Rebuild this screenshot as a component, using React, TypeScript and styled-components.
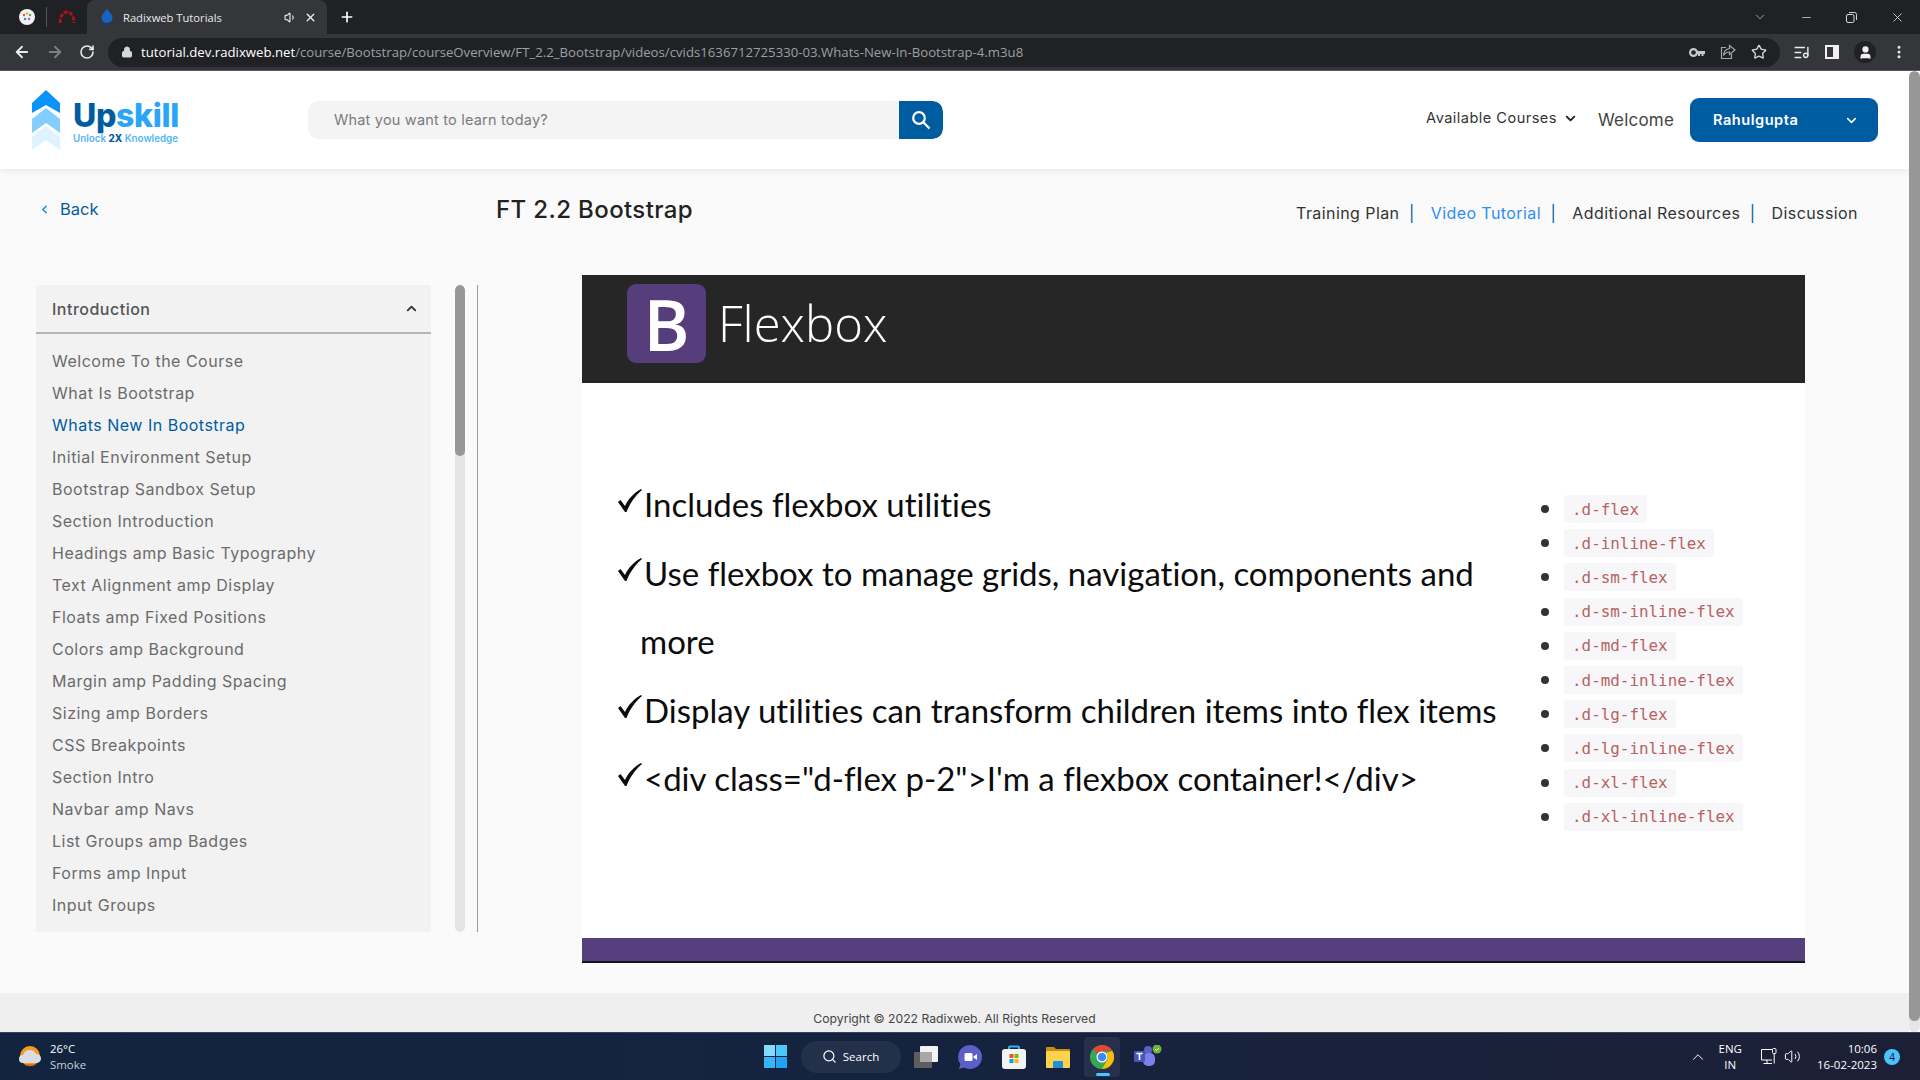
import React from "react";
import styled, { createGlobalStyle } from "styled-components";
import {
  ArrowLeft,
  ArrowRight,
  RotateCw,
  Lock,
  Star,
  ListMusic,
  User,
  ChevronDown,
  ChevronUp,
  ChevronLeft,
  Search,
  X,
  Plus,
  Minus,
  MoreVertical,
  Volume1,
  Volume2,
} from "lucide-react";

const Poppins = `Inter, "Noto Sans", sans-serif`;
const Blue = "#005ca1";

const GlobalStyle = createGlobalStyle`
  html, body {
    margin: 0;
    padding: 0;
    overflow: hidden;
    font-family: ${Poppins};
  }
  * { box-sizing: border-box; }
`;

const Screen = styled.div`
  width: 1920px;
  height: 1080px;
  display: flex;
  flex-direction: column;
  overflow: hidden;
`;

/* browser chrome */
const TabStrip = styled.div`
  height: 34px;
  background: #202124;
  display: flex;
  align-items: center;
  color: #fff;
  flex-shrink: 0;
`;

const PinnedTab = styled.div`
  width: 39px;
  display: flex;
  justify-content: center;
  align-items: center;
  margin-left: ${(p: { $first?: boolean }) => (p.$first ? "8px" : "0")};
  border-right: ${(p: { $first?: boolean }) =>
    p.$first ? "1px solid #55565a" : "none"};
  height: 20px;
`;

const ActiveTab = styled.div`
  width: 240px;
  height: 34px;
  margin-left: 1px;
  background: #35363a;
  border-radius: 8px 8px 0 0;
  display: flex;
  align-items: center;
  padding: 0 10px 0 12px;
  font-family: "Open Sans", sans-serif;
  font-size: 11.2px;
  color: #e8eaed;
`;

const TabTitle = styled.span`
  margin-left: 8px;
  flex: 1;
`;

const TabSound = styled(Volume1)`
  margin-right: 7px;
`;

const WindowControls = styled.div`
  margin-left: auto;
  display: flex;
  align-items: center;
  gap: 33px;
  padding-right: 15px;
  color: #d8d9db;
`;

const NewTab = styled.div`
  margin-left: 12px;
  display: flex;
`;

const Toolbar = styled.div`
  height: 37px;
  background: #35363a;
  border-bottom: 1px solid #5a5b60;
  display: flex;
  align-items: center;
  padding: 0 0 0 13px;
  flex-shrink: 0;
  color: #e8eaed;
`;

const NavIcons = styled.div`
  display: flex;
  align-items: center;
  gap: 15px;
  margin-right: 13px;
`;

const Omnibox = styled.div`
  width: 1672px;
  height: 29px;
  background: #202124;
  border-radius: 15px;
  display: flex;
  align-items: center;
  padding: 0 13px 0 13px;
  font-family: "Open Sans", sans-serif;
  font-size: 13.2px;
  color: #9aa0a6;
`;

const UrlHost = styled.span`
  color: #fff;
`;

const UrlText = styled.div`
  margin-left: 8px;
  flex: 1;
  white-space: nowrap;
`;

const OmniIcons = styled.div`
  display: flex;
  align-items: center;
  gap: 15px;
`;

const ExtIcons = styled.div`
  display: flex;
  align-items: center;
  gap: 15px;
  margin-left: 13px;
`;

const Avatar = styled.div`
  width: 22px;
  height: 22px;
  border-radius: 50%;
  background: #202124;
  display: flex;
  align-items: center;
  justify-content: center;
`;

/* page */
const Viewport = styled.div`
  flex: 1;
  display: flex;
  min-height: 0;
`;

const Content = styled.div`
  flex: 1;
  display: flex;
  flex-direction: column;
  background: #fafafa;
  min-width: 0;
`;

const PageScroll = styled.div`
  width: 11px;
  background: #e6e6e6;
  border-radius: 6px;
  overflow: hidden;
  flex-shrink: 0;
`;

const PageThumb = styled.div`
  height: 950px;
  background: #979797;
  border-radius: 6px;
`;

const Header = styled.header`
  height: 98px;
  background: #fff;
  box-shadow: 0 2px 6px rgba(0, 0, 0, 0.08);
  display: flex;
  align-items: center;
  padding: 0 31px 0 32px;
  flex-shrink: 0;
`;

const Brand = styled.div`
  display: flex;
  align-items: center;
  width: 276px;
  flex-shrink: 0;
`;

const BrandText = styled.div`
  margin-left: 13px;
  display: flex;
  flex-direction: column;
  margin-top: 3px;
`;

const BrandName = styled.div`
  font-size: 32px;
  line-height: 35px;
  font-weight: 800;
  letter-spacing: -0.3px;
  color: #2aa5f8;
  span {
    color: ${Blue};
  }
`;

const BrandTag = styled.div`
  font-size: 9.8px;
  font-weight: 600;
  line-height: 12px;
  color: #53b5f8;
  white-space: nowrap;
  span {
    color: ${Blue};
    font-weight: 800;
  }
`;

const SearchBox = styled.div`
  width: 635px;
  height: 38px;
  background: #f4f4f4;
  border-radius: 10px;
  display: flex;
  align-items: center;
  font-size: 14.5px;
  letter-spacing: 0.2px;
  color: #7b7b7b;
  padding-left: 26px;
  overflow: hidden;
  justify-content: space-between;
`;

const SearchHint = styled.span`
  margin-top: -2px;
`;

const SearchButton = styled.div`
  width: 44px;
  height: 38px;
  background: ${Blue};
  border-radius: 0 10px 10px 0;
  display: flex;
  align-items: center;
  justify-content: center;
  color: #fff;
`;

const HeaderNav = styled.div`
  margin-left: auto;
  display: flex;
  align-items: center;
`;

const CoursesLink = styled.div`
  display: flex;
  align-items: center;
  gap: 6px;
  font-size: 14.6px;
  letter-spacing: 0.45px;
  color: #333;
  margin-top: -4px;
`;

const WelcomeText = styled.div`
  font-size: 17px;
  letter-spacing: 0.2px;
  color: #444;
  margin-left: 20px;
  margin-right: 16px;
`;

const UserButton = styled.div`
  width: 188px;
  height: 44px;
  background: ${Blue};
  border-radius: 9px;
  display: flex;
  align-items: center;
  justify-content: space-between;
  padding: 0 19px 0 23px;
  color: #fff;
  font-size: 14.6px;
  letter-spacing: 0.5px;
  font-weight: 600;
`;

const CourseBar = styled.div`
  height: 106px;
  padding: 0 51px 0 38px;
  display: flex;
  flex-shrink: 0;
`;

const BackLink = styled.div`
  width: 458px;
  height: 80px;
  display: flex;
  align-items: center;
  gap: 9px;
  font-size: 16.5px;
  color: ${Blue};
`;

const CourseTitle = styled.h1`
  margin: 0;
  height: 80px;
  display: flex;
  align-items: center;
  font-size: 24px;
  letter-spacing: 0.38px;
  font-weight: 500;
  color: #222;
`;

const CourseTabs = styled.nav`
  margin-left: auto;
  height: 88px;
  display: flex;
  align-items: center;
  font-size: 16px;
  letter-spacing: 0.42px;
  color: #333;
`;

const CourseTab = styled.span<{ $active?: boolean }>`
  color: ${(p) => (p.$active ? "#2f8cf3" : "#333")};
  &:not(:last-child)::after {
    content: "|";
    margin: 0 16px 0 9.5px;
    color: ${Blue};
  }
`;

const Body = styled.div`
  display: flex;
  align-items: flex-start;
  padding-left: 36px;
`;

const Sidebar = styled.aside`
  width: 442px;
  height: 647px;
  margin-top: 10px;
  display: flex;
  border-right: 1px solid #9a9a9a;
  flex-shrink: 0;
`;

const Accordion = styled.div`
  width: 395px;
  height: 100%;
  background: #f2f2f2;
  overflow: hidden;
`;

const AccordionHead = styled.div`
  height: 49px;
  border-bottom: 2px solid #b5b5b5;
  display: flex;
  align-items: center;
  justify-content: space-between;
  padding: 0 12px 0 16px;
  font-size: 16px;
  letter-spacing: 0.5px;
  font-weight: 500;
  color: #555;
`;

const Lessons = styled.ul`
  list-style: none;
  margin: 0;
  padding: 11px 0 0 16px;
`;

const Lesson = styled.li<{ $active?: boolean }>`
  height: 32px;
  display: flex;
  align-items: center;
  font-size: 16px;
  letter-spacing: 0.5px;
  color: ${(p) => (p.$active ? Blue : "#6b6b6b")};
  white-space: nowrap;
`;

const SideScroll = styled.div`
  width: 10px;
  margin-left: 24px;
  background: #e4e4e4;
  border-radius: 5px;
  overflow: hidden;
`;

const SideThumb = styled.div`
  height: 171px;
  background: #979797;
  border-radius: 5px;
`;

/* slide inside the video */
const Slide = styled.div`
  width: 1223px;
  height: 688px;
  margin-left: 104px;
  background: #fff;
  display: flex;
  flex-direction: column;
  flex-shrink: 0;
`;

const SlideBanner = styled.div`
  height: 108px;
  background: #262626;
  display: flex;
  align-items: center;
  padding-left: 45px;
  flex-shrink: 0;
`;

const BootstrapMark = styled.div`
  width: 79px;
  height: 79px;
  margin-top: -11px;
  border-radius: 9px;
  background: #563d7c;
  display: flex;
  align-items: center;
  justify-content: center;
  font-family: "Open Sans", sans-serif;
  font-size: 70px;
  font-weight: 600;
  color: #fff;
  line-height: 1;
`;

const SlideTitle = styled.div`
  margin-left: 12px;
  margin-top: -12px;
  font-family: "Open Sans", sans-serif;
  font-size: 49px;
  font-weight: 300;
  color: #fff;
`;

const SlideBody = styled.div`
  flex: 1;
  display: flex;
  justify-content: space-between;
  min-height: 0;
`;

const Points = styled.div`
  width: 930px;
  padding: 87px 0 0 36px;
`;

const Point = styled.div`
  display: flex;
  font-family: Lato, sans-serif;
  font-size: 33px;
  line-height: 68.6px;
  font-variant-ligatures: none;
  color: #0c0c0c;
`;

const Check = styled.svg`
  width: 22px;
  height: 23px;
  margin-top: 19px;
  flex-shrink: 0;
  overflow: visible;
`;

const PointText = styled.div`
  text-indent: 4px;
`;

const Utilities = styled.ul`
  width: 265px;
  margin: 0;
  padding: 109px 0 0 0;
  list-style: none;
`;

const Utility = styled.li`
  height: 34.2px;
  display: flex;
  align-items: center;
  &::before {
    content: "";
    width: 8px;
    height: 8px;
    border-radius: 50%;
    background: #333;
    margin: 0 15px 0 1px;
    flex-shrink: 0;
  }
`;

const Code = styled.code`
  height: 28px;
  padding: 0 8px;
  background: #f7f7f9;
  border-radius: 3px;
  display: flex;
  align-items: center;
  font-family: "DejaVu Sans Mono", monospace;
  font-size: 15.9px;
  color: #b86261;
`;

const SlideBand = styled.div`
  height: 25px;
  background: #563f7d;
  border-bottom: 2px solid #17121f;
  flex-shrink: 0;
`;

const Footer = styled.footer`
  margin-top: auto;
  height: 39px;
  background: #efefef;
  display: flex;
  align-items: flex-end;
  justify-content: center;
  padding: 0 0 6px 0;
  font-size: 12.2px;
  color: #444;
  flex-shrink: 0;
`;

/* windows taskbar */
const Taskbar = styled.div`
  height: 48px;
  background: linear-gradient(90deg, #12243f 0%, #15233f 45%, #1c2036 100%);
  border-top: 1px solid #3a4459;
  display: grid;
  grid-template-columns: 1fr auto 1fr;
  align-items: center;
  color: #fff;
  font-family: "Open Sans", sans-serif;
  flex-shrink: 0;
`;

const Weather = styled.div`
  display: flex;
  align-items: center;
  padding-left: 18px;
  gap: 8px;
  font-size: 11.4px;
  line-height: 16px;
`;

const WeatherLabel = styled.div`
  color: #c8ccd4;
`;

const TaskIcons = styled.div`
  display: flex;
  align-items: center;
  gap: 20px;
  padding-left: 5px;
`;

const TaskSearch = styled.div`
  width: 100px;
  height: 32px;
  border-radius: 16px;
  background: #23304a;
  display: flex;
  align-items: center;
  justify-content: center;
  gap: 6px;
  font-size: 11.5px;
  margin: 0 -7px 0 -6px;
`;

const ChromeSlot = styled.div`
  width: 36px;
  height: 40px;
  border-radius: 4px;
  background: #26304a;
  display: flex;
  align-items: center;
  justify-content: center;
  margin: 0 -6px;
  position: relative;
  &::after {
    content: "";
    position: absolute;
    bottom: 1px;
    left: 12px;
    width: 14px;
    height: 3px;
    border-radius: 2px;
    background: #4cc2ff;
  }
`;

const Tray = styled.div`
  display: flex;
  align-items: center;
  justify-content: flex-end;
  font-size: 11.5px;
  line-height: 16px;
  padding-right: 20px;
`;

const TrayLang = styled.div`
  text-align: center;
  margin: 0 18px 0 12px;
`;

const TrayIcons = styled.div`
  display: flex;
  gap: 7px;
  align-items: center;
`;

const Clock = styled.div`
  text-align: right;
  margin: 0 7px 0 16px;
`;

const Badge = styled.div`
  width: 16px;
  height: 16px;
  border-radius: 50%;
  background: #4cc2ff;
  color: #111;
  font-size: 10px;
  display: flex;
  align-items: center;
  justify-content: center;
`;

const lessons = [
  "Welcome To the Course",
  "What Is Bootstrap",
  "Whats New In Bootstrap",
  "Initial Environment Setup",
  "Bootstrap Sandbox Setup",
  "Section Introduction",
  "Headings amp Basic Typography",
  "Text Alignment amp Display",
  "Floats amp Fixed Positions",
  "Colors amp Background",
  "Margin amp Padding Spacing",
  "Sizing amp Borders",
  "CSS Breakpoints",
  "Section Intro",
  "Navbar amp Navs",
  "List Groups amp Badges",
  "Forms amp Input",
  "Input Groups",
];

const utilities = [
  ".d-flex",
  ".d-inline-flex",
  ".d-sm-flex",
  ".d-sm-inline-flex",
  ".d-md-flex",
  ".d-md-inline-flex",
  ".d-lg-flex",
  ".d-lg-inline-flex",
  ".d-xl-flex",
  ".d-xl-inline-flex",
];

const points = [
  "Includes flexbox utilities",
  "Use flexbox to manage grids, navigation, components and more",
  "Display utilities can transform children items into flex items",
  '<div class="d-flex p-2">I\'m a flexbox container!</div>',
];

const ChevronLogo = () => (
  <svg width="28" height="60" viewBox="0 0 28 60">
    <path d="M14 0 L28 13 V23 L14 15 L0 23 V13 Z" fill="#0a93fb" />
    <path d="M14 18 L28 29 V43 L14 33 L0 43 V29 Z" fill="#84cdff" />
    <path d="M14 36 L28 47 V60 L14 50 L0 60 V47 Z" fill="#dff2ff" />
  </svg>
);

const SearchGlass = () => (
  <svg width="20" height="20" viewBox="0 0 20 20" fill="none" stroke="#fff" strokeWidth="2.2">
    <circle cx="8" cy="8" r="5.8" />
    <path d="M12.300 12.300 L18.500 18.500" />
  </svg>
);

const KeyIcon = () => (
  <svg width="16" height="11" viewBox="0 0 16 11">
    <circle cx="4.500" cy="5.500" r="3.400" fill="none" stroke="#c8c9cb" strokeWidth="2.200" />
    <path d="M8 4h8v3h-1.500v2h-2V7H11v2H9V7H8z" fill="#c8c9cb" />
  </svg>
);

const ShareIcon = () => (
  <svg width="16" height="16" viewBox="0 0 16 16" fill="none" stroke="#a5a6a9" strokeWidth="1.200">
    <path d="M6 3.500H1.500V14.500H11.500V10" />
    <path d="M9.500 1.500L15 6L9.500 10.500V8C7 8 5 9 3.500 11.500C3.800 8 6 5 9.500 4.500z" />
  </svg>
);

const NetworkIcon = () => (
  <svg width="17" height="17" viewBox="0 0 17 17" fill="none" stroke="#fff" strokeWidth="1">
    <path d="M12 1.500H1.500V12H12" />
    <path d="M7 12V15.500M3.500 15.500H12" />
    <rect x="12.500" y="0.500" width="3.500" height="5" rx="1" />
    <path d="M14.200 5.500V15.500" />
  </svg>
);

const WindowsIcon = () => (
  <svg width="23" height="23" viewBox="0 0 23 23">
    <rect width="11" height="11" fill="#7fdcfb" />
    <rect x="12" width="11" height="11" fill="#4cc8fa" />
    <rect y="12" width="11" height="11" fill="#35b5f6" />
    <rect x="12" y="12" width="11" height="11" fill="#1ea4f3" />
  </svg>
);

const TaskViewIcon = () => (
  <svg width="24" height="22" viewBox="0 0 24 22">
    <rect y="6" width="18" height="16" rx="1" fill="#5e5e5e" />
    <rect x="6" width="18" height="16" rx="1" fill="#f2f2f2" />
    <rect x="6" y="6" width="12" height="10" fill="#a8a8a8" />
  </svg>
);

const MeetIcon = () => (
  <svg width="24" height="24" viewBox="0 0 24 24">
    <path d="M12 0a12 12 0 1 1-6 22.400L1 24l1.400-5A12 12 0 0 1 12 0z" fill="#5b5fc7" />
    <rect x="6.500" y="8" width="8" height="8" rx="1.500" fill="#fff" />
    <path d="M15.500 11.500 19 9v6l-3.500-2.500z" fill="#fff" />
  </svg>
);

const StoreIcon = () => (
  <svg width="24" height="24" viewBox="0 0 24 24">
    <path d="M7 5V2.500a1 1 0 0 1 1-1h8a1 1 0 0 1 1 1V5" fill="none" stroke="#29b6f6" strokeWidth="2" />
    <rect y="4" width="24" height="20" rx="3" fill="#f3f3f3" />
    <rect x="7.500" y="9" width="4" height="4" fill="#f25022" />
    <rect x="12.500" y="9" width="4" height="4" fill="#7fba00" />
    <rect x="7.500" y="14" width="4" height="4" fill="#00a4ef" />
    <rect x="12.500" y="14" width="4" height="4" fill="#ffb900" />
  </svg>
);

const ExplorerIcon = () => (
  <svg width="24" height="22" viewBox="0 0 24 22">
    <path d="M0 2a1 1 0 0 1 1-1h7l2 2h13a1 1 0 0 1 1 1v4H0z" fill="#c98f10" />
    <rect y="5" width="24" height="17" rx="1" fill="#fcd34d" />
    <rect x="7" y="15" width="10" height="7" rx="1" fill="#1f8fd8" />
  </svg>
);

const ChromeIcon = () => (
  <svg width="24" height="24" viewBox="0 0 24 24">
    <circle cx="12" cy="12" r="12" fill="#34a853" />
    <path d="M12 0a12 12 0 0 1 10.400 6H12a6 6 0 0 0-5.200 3L3.600 4.200A12 12 0 0 1 12 0z" fill="#ea4335" />
    <path d="M22.400 6A12 12 0 0 1 12 24l5.200-9A6 6 0 0 0 16 8z" fill="#fbbc05" />
    <circle cx="12" cy="12" r="5.500" fill="#fff" />
    <circle cx="12" cy="12" r="4.300" fill="#4285f4" />
  </svg>
);

const TeamsIcon = () => (
  <svg width="28" height="24" viewBox="0 0 28 24">
    <circle cx="14" cy="5" r="4" fill="#5b5fc7" />
    <rect x="9" y="8" width="12" height="13" rx="5" fill="#7b83eb" />
    <rect y="6" width="11" height="11" rx="1" fill="#4b53bc" />
    <path d="M2.500 8.500h6M5.500 8.500V15" stroke="#fff" strokeWidth="1.600" />
    <circle cx="23" cy="4" r="4.500" fill="#6bb33a" />
    <path d="M21 4l1.500 1.500L25 3" stroke="#fff" strokeWidth="1" fill="none" />
  </svg>
);

const CloudIcon = () => (
  <svg width="24" height="24" viewBox="0 0 24 24">
    <circle cx="12" cy="11" r="10" fill="#f39c1f" />
    <path d="M6 19c3 3 9 3 12 0z" fill="#e8680c" />
    <path d="M5 18a4 4 0 0 1 0-8 7 7 0 0 1 13-1 4.500 4.500 0 0 1 1 9z" fill="#d9dde3" />
  </svg>
);

const RedArcIcon = () => (
  <svg width="18" height="14" viewBox="0 0 18 14">
    <path d="M2 13c0-6 3-11 7-11s7 5 7 11" fill="none" stroke="#b01116" strokeWidth="3" strokeDasharray="4 1.500" />
  </svg>
);

const AppBadgeIcon = () => (
  <svg width="16" height="16" viewBox="0 0 16 16">
    <circle cx="8" cy="8" r="8" fill="#f1f1f1" />
    <circle cx="5" cy="6" r="1.200" fill="#e8553e" />
    <circle cx="8" cy="4.500" r="1.200" fill="#f2b01e" />
    <circle cx="11" cy="6" r="1.200" fill="#3bb273" />
    <circle cx="6" cy="10" r="1.200" fill="#3a86d8" />
    <circle cx="10" cy="10" r="1.200" fill="#b455c9" />
  </svg>
);

const FaviconIcon = () => (
  <svg width="16" height="18" viewBox="0 0 16 18">
    <path d="M8 1c3 3.500 5.500 6 5.500 8.500a5.500 5.500 0 0 1-11 0C2.500 7 5 4.500 8 1z" fill="#1565c0" />
    <rect x="2" y="15.500" width="12" height="1.500" fill="#1b3b6f" />
  </svg>
);

const RestoreIcon = () => (
  <svg width="11" height="11" viewBox="0 0 11 11">
    <rect x="0.500" y="2.500" width="7.500" height="8" rx="1.500" fill="none" stroke="#d8d9db" />
    <path d="M3 0.500h5.500a2 2 0 0 1 2 2V8" fill="none" stroke="#d8d9db" />
  </svg>
);

const SidePanelIcon = () => (
  <svg width="14" height="14" viewBox="0 0 14 14">
    <rect width="14" height="14" fill="#f1f1f1" />
    <rect x="2" y="2" width="6" height="10" fill="#35363a" />
  </svg>
);

const CheckMark = () => (
  <Check viewBox="0 0 22 23">
    <path d="M0 13 L2.500 11 L7 17 C10 10 16 4 23 0 L24 1 C17 7 12 14 8.500 23 L7 23 Z" fill="#0c0c0c" />
  </Check>
);

const App = () => {
  return (
    <Screen>
      <GlobalStyle />
      <TabStrip>
        <PinnedTab $first>
          <AppBadgeIcon />
        </PinnedTab>
        <PinnedTab>
          <RedArcIcon />
        </PinnedTab>
        <ActiveTab>
          <FaviconIcon />
          <TabTitle>Radixweb Tutorials</TabTitle>
          <TabSound size={13} color="#f1f1f1" />
          <X size={13} strokeWidth={2.5} />
        </ActiveTab>
        <NewTab>
          <Plus size={16} strokeWidth={2.5} />
        </NewTab>
        <WindowControls>
          <ChevronDown size={14} strokeWidth={1.2} />
          <Minus size={13} strokeWidth={1.4} />
          <RestoreIcon />
          <X size={15} strokeWidth={1.4} />
        </WindowControls>
      </TabStrip>
      <Toolbar>
        <NavIcons>
          <ArrowLeft size={18} strokeWidth={2.4} />
          <ArrowRight size={18} strokeWidth={2.4} color="#7e8085" />
          <RotateCw size={16} strokeWidth={2.4} />
        </NavIcons>
        <Omnibox>
          <Lock size={12} color="#d5d6d8" fill="#d5d6d8" />
          <UrlText>
            <UrlHost>tutorial.dev.radixweb.net</UrlHost>
            /course/Bootstrap/courseOverview/FT_2.2_Bootstrap/videos/cvids1636712725330-03.Whats-New-In-Bootstrap-4.m3u8
          </UrlText>
          <OmniIcons>
            <KeyIcon />
            <ShareIcon />
            <Star size={16} color="#d8d9db" />
          </OmniIcons>
        </Omnibox>
        <ExtIcons>
          <ListMusic size={17} />
          <SidePanelIcon />
          <Avatar>
            <User size={15} fill="#f1f1f1" color="#f1f1f1" />
          </Avatar>
          <MoreVertical size={16} strokeWidth={2.5} />
        </ExtIcons>
      </Toolbar>
      <Viewport>
        <Content>
          <Header>
            <Brand>
              <ChevronLogo />
              <BrandText>
                <BrandName>
                  <span>Up</span>skill
                </BrandName>
                <BrandTag>
                  Unlock <span>2X</span> Knowledge
                </BrandTag>
              </BrandText>
            </Brand>
            <SearchBox>
              <SearchHint>What you want to learn today?</SearchHint>
              <SearchButton>
                <SearchGlass />
              </SearchButton>
            </SearchBox>
            <HeaderNav>
              <CoursesLink>
                Available Courses
                <ChevronDown size={15} strokeWidth={3} color="#222" />
              </CoursesLink>
              <WelcomeText>Welcome</WelcomeText>
              <UserButton>
                Rahulgupta
                <ChevronDown size={15} strokeWidth={2.5} />
              </UserButton>
            </HeaderNav>
          </Header>
          <CourseBar>
            <BackLink>
              <ChevronLeft size={13} strokeWidth={3} color="#1b8cf2" />
              Back
            </BackLink>
            <CourseTitle>FT 2.2 Bootstrap</CourseTitle>
            <CourseTabs>
              <CourseTab>Training Plan</CourseTab>
              <CourseTab $active>Video Tutorial</CourseTab>
              <CourseTab>Additional Resources</CourseTab>
              <CourseTab>Discussion</CourseTab>
            </CourseTabs>
          </CourseBar>
          <Body>
            <Sidebar>
              <Accordion>
                <AccordionHead>
                  Introduction
                  <ChevronUp size={15} strokeWidth={3} color="#333" />
                </AccordionHead>
                <Lessons>
                  {lessons.map((name) => (
                    <Lesson key={name} $active={name === "Whats New In Bootstrap"}>
                      {name}
                    </Lesson>
                  ))}
                </Lessons>
              </Accordion>
              <SideScroll>
                <SideThumb />
              </SideScroll>
            </Sidebar>
            <Slide>
              <SlideBanner>
                <BootstrapMark>B</BootstrapMark>
                <SlideTitle>Flexbox</SlideTitle>
              </SlideBanner>
              <SlideBody>
                <Points>
                  {points.map((text) => (
                    <Point key={text}>
                      <CheckMark />
                      <PointText>{text}</PointText>
                    </Point>
                  ))}
                </Points>
                <Utilities>
                  {utilities.map((name) => (
                    <Utility key={name}>
                      <Code>{name}</Code>
                    </Utility>
                  ))}
                </Utilities>
              </SlideBody>
              <SlideBand />
            </Slide>
          </Body>
          <Footer>Copyright © 2022 Radixweb. All Rights Reserved</Footer>
        </Content>
        <PageScroll>
          <PageThumb />
        </PageScroll>
      </Viewport>
      <Taskbar>
        <Weather>
          <CloudIcon />
          <div>
            26°C
            <WeatherLabel>Smoke</WeatherLabel>
          </div>
        </Weather>
        <TaskIcons>
          <WindowsIcon />
          <TaskSearch>
            <Search size={15} />
            Search
          </TaskSearch>
          <TaskViewIcon />
          <MeetIcon />
          <StoreIcon />
          <ExplorerIcon />
          <ChromeSlot>
            <ChromeIcon />
          </ChromeSlot>
          <TeamsIcon />
        </TaskIcons>
        <Tray>
          <ChevronUp size={18} strokeWidth={1.3} />
          <TrayLang>
            ENG
            <br />
            IN
          </TrayLang>
          <TrayIcons>
            <NetworkIcon />
            <Volume2 size={17} strokeWidth={1.4} />
          </TrayIcons>
          <Clock>
            10:06
            <br />
            16-02-2023
          </Clock>
          <Badge>4</Badge>
        </Tray>
      </Taskbar>
    </Screen>
  );
};

export default App;
